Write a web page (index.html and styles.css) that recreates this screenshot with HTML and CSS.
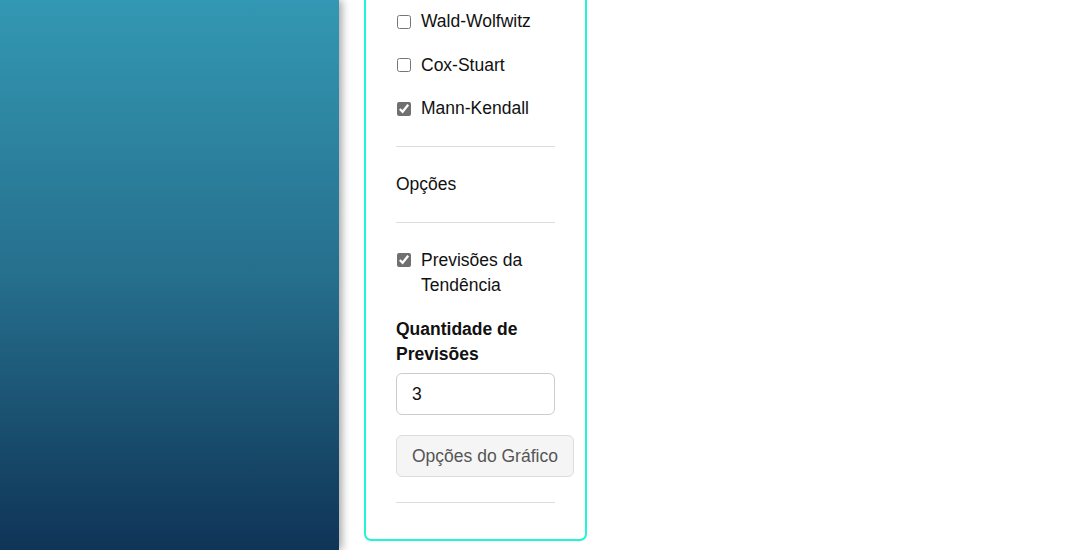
FILE: index.html
```html
<!DOCTYPE html>
<html lang="pt">
<head>
<meta charset="utf-8">
<title>Opções</title>
<link rel="stylesheet" href="styles.css">
</head>
<body>
<div class="layout">
  <aside class="sidebar"></aside>
  <main class="main">
    <div class="card">
      <label class="check-row"><input type="checkbox" class="check"><span>Wald-Wolfwitz</span></label>
      <label class="check-row"><input type="checkbox" class="check"><span>Cox-Stuart</span></label>
      <label class="check-row"><input type="checkbox" class="check" checked><span>Mann-Kendall</span></label>
      <hr class="sep sep-first">
      <div class="section-title">Opções</div>
      <hr class="sep">
      <label class="check-row check-wrap"><input type="checkbox" class="check" checked><span>Previsões da Tendência</span></label>
      <label class="field-label" for="qtd">Quantidade de Previsões</label>
      <input id="qtd" class="field-input" type="text" value="3">
      <button class="btn" type="button">Opções do Gráfico</button>
      <hr class="sep sep-last">
    </div>
  </main>
</div>
</body>
</html>
```

FILE: styles.css
```css
html, body {
  margin: 0;
  padding: 0;
  height: 100%;
  overflow: hidden;
  background: #ffffff;
}

body {
  font-family: "Liberation Sans", Arial, sans-serif;
  font-size: 17.5px;
  line-height: 25px;
  color: #111111;
}

.layout {
  display: flex;
  height: 550px;
}

.sidebar {
  width: 339px;
  flex: 0 0 339px;
  background: linear-gradient(to bottom, #3398b3 0%, #266f8d 50%, #0f3456 100%);
  box-shadow: 3px 0 8px rgba(0, 0, 0, 0.35);
  position: relative;
  z-index: 1;
}

.main {
  flex: 1;
  padding-left: 25px;
}

.card {
  width: 159px;
  margin-top: -23px;
  padding: 30px 30px 36px 30px;
  border: 2px solid #20f5d8;
  border-radius: 7px;
  display: flex;
  flex-direction: column;
}

.check-row {
  display: flex;
  align-items: flex-start;
  margin-bottom: 18.5px;
}

.check-row span {
  white-space: normal;
}

.check {
  width: 14px;
  height: 14px;
  margin: 5.5px 10px 0 1px;
  flex: 0 0 14px;
  accent-color: #707070;
}

.sep {
  border: 0;
  border-top: 1px solid #dddddd;
  margin: 0;
  width: 159px;
}

.sep-first {
  margin-top: 6.5px;
}

.section-title {
  margin: 24.5px 0 25.5px;
}

.check-wrap {
  margin-top: 24.5px;
  margin-bottom: 19px;
}

.field-label {
  font-weight: bold;
  margin-bottom: 6.5px;
}

.field-input {
  box-sizing: border-box;
  width: 159px;
  height: 42px;
  padding: 0 15px;
  border: 1px solid #cccccc;
  border-radius: 6px;
  font-family: "Liberation Sans", Arial, sans-serif;
  font-size: 17.5px;
  color: #111111;
  background: #ffffff;
  margin: 0 0 20px 0;
}

.btn {
  box-sizing: border-box;
  align-self: flex-start;
  height: 42px;
  padding: 0 15px;
  border: 1px solid #dddddd;
  border-radius: 6px;
  background: #f5f5f5;
  color: #555555;
  font-family: "Liberation Sans", Arial, sans-serif;
  font-size: 17.5px;
  white-space: nowrap;
  margin: 0 0 25px 0;
}
```
